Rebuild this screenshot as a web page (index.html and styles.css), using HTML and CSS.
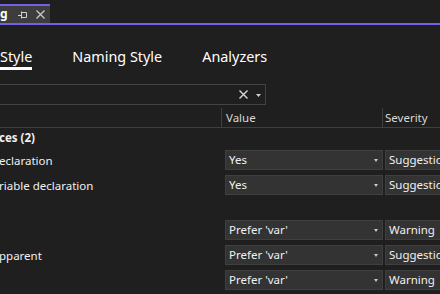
FILE: index.html
```html
<!DOCTYPE html>
<html>
<head>
<meta charset="utf-8">
<link rel="stylesheet" href="styles.css">
</head>
<body>
<div class="page">
  <div class="docstrip">
    <div class="doctab">
      <span class="doctitle">g</span>
      <svg class="pin" width="9" height="8" viewBox="0 0 9 8"><path d="M0 4.5H3.5M3.5 0.5V7.5M3.5 1.5H8.5V6.5H3.5" fill="none" stroke="#d0d0d0" stroke-width="1"/></svg>
      <svg class="close" width="9" height="9" viewBox="0 0 9 9"><path d="M0.5 0.5L8.5 8.5M8.5 0.5L0.5 8.5" fill="none" stroke="#c8c8c8" stroke-width="1.3"/></svg>
    </div>
  </div>

  <div class="tabs">
    <div class="tab active">Style</div>
    <div class="tab">Naming Style</div>
    <div class="tab">Analyzers</div>
  </div>

  <div class="search">
    <svg class="sx" width="9" height="9" viewBox="0 0 9 9"><path d="M0.5 0.5L8.5 8.5M8.5 0.5L0.5 8.5" fill="none" stroke="#d8d8d8" stroke-width="1.4"/></svg>
    <svg class="caret" width="5" height="3" viewBox="0 0 5 3"><path d="M0 0H5L2.5 3Z" fill="#d0d0d0"/></svg>
  </div>

  <div class="grid">
    <div class="head">
      <div class="hcell name"></div>
      <div class="hcell value">Value</div>
      <div class="hcell sev">Severity</div>
    </div>

    <div class="group"><span class="lbl bold">ces (2)</span></div>
    <div class="row">
      <div class="name"><span class="lbl">eclaration</span></div>
      <div class="value"><div class="combo">Yes<span class="dd"></span></div></div>
      <div class="sev"><div class="combo">Suggestio</div></div>
    </div>
    <div class="row">
      <div class="name"><span class="lbl">riable declaration</span></div>
      <div class="value"><div class="combo">Yes<span class="dd"></span></div></div>
      <div class="sev"><div class="combo">Suggestio</div></div>
    </div>

    <div class="group"></div>
    <div class="row">
      <div class="name"></div>
      <div class="value"><div class="combo">Prefer 'var'<span class="dd"></span></div></div>
      <div class="sev"><div class="combo">Warning</div></div>
    </div>
    <div class="row">
      <div class="name"><span class="lbl">pparent</span></div>
      <div class="value"><div class="combo">Prefer 'var'<span class="dd"></span></div></div>
      <div class="sev"><div class="combo">Suggestio</div></div>
    </div>
    <div class="row">
      <div class="name"></div>
      <div class="value"><div class="combo">Prefer 'var'<span class="dd"></span></div></div>
      <div class="sev"><div class="combo">Warning</div></div>
    </div>
  </div>
</div>
</body>
</html>
```

FILE: styles.css
```css
html, body {
  margin: 0;
  padding: 0;
  background: #1f1f1f;
}
.page {
  width: 440px;
  height: 294px;
  overflow: hidden;
  font-family: "Noto Sans", "Open Sans", sans-serif;
  color: #f0f0f0;
  font-size: 11.5px;
}
.docstrip {
  padding-top: 4px;
  border-bottom: 2px solid #7160e8;
  height: 19px;
}
.doctab {
  width: 50px;
  height: 17px;
  border-top: 2px solid #7160e8;
  background: #3d3d3d;
  display: flex;
  align-items: center;
}
.doctitle {
  font-weight: bold;
  font-size: 12px;
  color: #fff;
  line-height: 17px;
  margin-top: -2px;
}
.pin {
  margin-left: 10px;
}
.close {
  margin-left: 9px;
}
.tabs {
  display: flex;
  gap: 40px;
  margin-top: 22px;
  height: 37px;
}
.tab {
  font-size: 14.4px;
  color: #ffffff;
  line-height: 20px;
  height: 20px;
}
.tab.active {
  border-bottom: 3px solid #ffffff;
  height: 20px;
}
.search {
  width: 261px;
  height: 19px;
  border: 1px solid #434343;
  border-left: none;
  display: flex;
  align-items: center;
  justify-content: flex-end;
  padding-right: 4px;
}
.sx { margin-right: 8px; }
.caret { margin-top: 1px; }
.grid {
  width: 440px;
}
.head {
  display: grid;
  grid-template-columns: 221px 161px 58px;
  height: 21px;
  border-bottom: 1px solid #3f3f3f;
  margin-top: 1px;
}
.hcell {
  color: #d8d8d8;
  white-space: nowrap;
  overflow: hidden;
}
.hcell.value {
  border-left: 1px solid #3f3f3f;
  padding-left: 4px;
  margin-top: 2px;
  line-height: 19px;
}
.hcell.sev {
  border-left: 1px solid #3f3f3f;
  padding-left: 2px;
  margin-top: 2px;
  line-height: 19px;
}
.group {
  height: 20px;
  line-height: 20px;
  white-space: nowrap;
  overflow: hidden;
}
.bold { font-weight: bold; }
.row {
  display: grid;
  grid-template-columns: 225px 160px 55px;
  height: 25px;
  align-items: start;
}
.row .name {
  line-height: 25px;
  white-space: nowrap;
  overflow: hidden;
}
.lbl {
  margin-left: -1px;
  display: inline-block;
}
.combo {
  margin-top: 2px;
  height: 18px;
  line-height: 18px;
  background: #333333;
  border: 1px solid #3f3f3f;
  padding-left: 3px;
  position: relative;
  white-space: nowrap;
  overflow: hidden;
}
.value .combo {
  width: 153px;
}
.sev .combo {
  width: 60px;
  border-right: none;
}
.dd {
  position: absolute;
  right: 4px;
  top: 8px;
  width: 0;
  height: 0;
  border-left: 2.5px solid transparent;
  border-right: 2.5px solid transparent;
  border-top: 3px solid #c8c8c8;
}
```
